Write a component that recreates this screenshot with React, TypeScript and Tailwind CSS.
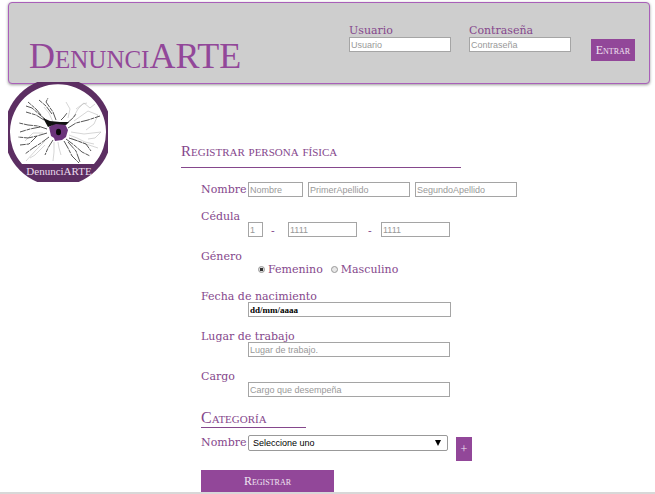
import type { InputHTMLAttributes, ReactNode } from "react";

const serif = "font-['Liberation_Serif',serif]";
const box =
  "block h-[15px] border border-[#a5a5a5] bg-white px-px text-[9px] leading-[13px] text-black placeholder:text-[#999] outline-none";
const sans = "font-['Liberation_Sans',sans-serif]";
const labelBase = "block h-[13px] text-[11px] whitespace-nowrap";
const label = `${labelBase} leading-[15px]`;
const loginLabel = `${labelBase} leading-[13px]`;

function TextBox({ className = "", ...rest }: InputHTMLAttributes<HTMLInputElement>) {
  return <input type="text" {...rest} className={`${box} ${sans} ${className}`} />;
}

function Field({ id, title, children }: { id: string; title: string; children: ReactNode }) {
  return (
    <div className="mb-3">
      <label htmlFor={id} className={label}>{title}</label>
      <div className="pl-[47px]">{children}</div>
    </div>
  );
}

const darkVeins = [
  "M37 37L32 33L24 26L18 24", "M36 38L28 33L18 30", "M33 33L28 27L20 20",
  "M48 38L45 30L38 20L40 16", "M44 32L38 24L31 18", "M53 38L56 35L59 31",
  "M58 42L65 36L68 32", "M39 47L30 44L20 43L11 41", "M32 45L22 47L12 50",
  "M39 51L29 54L20 56L10 55", "M29 54L21 62L12 63", "M41 55L33 61L25 66L17 72",
  "M45 58L40 66L37 73", "M56 59L60 66L64 74L71 81", "M58 57L66 63L74 70L82 74",
  "M61 56L70 59L78 62L83 69", "M60 60L68 69L72 80", "M60 46L68 41L80 38L92 34",
];

const lightVeins = [
  "M45 40L41 31L36 25", "M66 39L73 34L80 29L90 33L86 42L78 48", "M65 36L70 27L75 22L79 21",
  "M60 36L62 27L58 20", "M68 27L76 21L82 26L87 22", "M61 53L69 56L77 60L86 62",
  "M63 50L76 52L93 50L87 56L80 57", "M37 59L28 68L18 79", "M46 60L46 70L45 79",
  "M50 60L51 66L53 73", "M63 56L72 60L90 66", "M35 51L25 51L17 59", "M37 63L27 73L22 76",
];

function Logo() {
  return (
    <svg viewBox="0 0 100 100" className="-mt-0.5 size-[100px] shrink-0" role="img" aria-label="DenunciARTE">
      <circle cx="50" cy="50" r="54" fill="#5c2e62" />
      <path d="M14 82A48 48 0 1 1 86 82Z" fill="#fff" />
      <g fill="none" stroke="#bbb" strokeWidth=".6">
        {lightVeins.map((d) => <path key={d} d={d} />)}
      </g>
      <g fill="none" stroke="#444" strokeWidth=".9" strokeDasharray="9 .8 4 .8">
        {darkVeins.map((d) => <path key={d} d={d} />)}
      </g>
      <path d="M41 45L48 41L57 42L60 48L58 55L54 58L47 59L46 56L43 54Z" fill="#6b347b" />
      <path d="M35 36L42 39L52 40L61 40L58 43L48 42L40 45Z" fill="#111" />
      <ellipse cx="50.5" cy="50" rx="2.5" ry="3.2" fill="#080808" />
      <text x="51" y="93" textAnchor="middle" fill="#eadcec" className={`${serif} text-[11px]`}>DenunciARTE</text>
    </svg>
  );
}

export default function App() {
  return (
    <div className="border-b-2 border-[#d8d8d8] bg-white font-['DejaVu_Serif',serif] text-[#85478c]">
      <header className="mt-0.5 mr-[5px] ml-2 flex justify-between rounded-[4px] border border-[#a95fb9] bg-[#cecece] pt-[21px] pr-3.5 pb-[7px] pl-5 shadow-[0_1px_3px_#999]">
        <h1 className={`${serif} pt-3 text-[36px] leading-[40px] text-[#924799] [font-variant-caps:small-caps]`}>DenunciARTE</h1>
        <form className="flex items-start" onSubmit={(e) => e.preventDefault()}>
          <div>
            <label htmlFor="usuario" className={loginLabel}>Usuario</label>
            <TextBox id="usuario" placeholder="Usuario" className="w-[102px]" />
          </div>
          <div className="ml-[18px]">
            <label htmlFor="clave" className={loginLabel}>Contraseña</label>
            <TextBox id="clave" type="password" placeholder="Contraseña" className="w-[102px]" />
          </div>
          <button className={`${serif} mt-[15px] ml-5 h-[22px] w-11 bg-[#924799] text-[12px] text-[#f0e4f2] [font-variant-caps:small-caps]`}>Entrar</button>
        </form>
      </header>
      <main className="ml-2 flex items-start">
        <Logo />
        <form className="ml-[73px] flex-1 pt-[58px]" onSubmit={(e) => e.preventDefault()}>
          <h2 className={`${serif} w-[280px] border-b border-[#85478c] pb-[7px] text-[15px] leading-[18px] [font-variant-caps:small-caps]`}>Registrar persona física</h2>
          <div className="pt-3.5 pl-5">
            <div className="mb-3 flex items-start">
              <label htmlFor="nombre" className={`${label} w-[47px]`}>Nombre</label>
              <div className="flex gap-[5px]">
                <TextBox id="nombre" placeholder="Nombre" className="w-[55px]" />
                <TextBox aria-label="Primer apellido" placeholder="PrimerApellido" className="w-[102px]" />
                <TextBox aria-label="Segundo apellido" placeholder="SegundoApellido" className="w-[102px]" />
              </div>
            </div>
            <Field id="cedula" title="Cédula">
              <div className="flex text-[11px] leading-[20px]">
                <TextBox id="cedula" placeholder="1" className="w-[15px]" />
                <span className="h-[15px] w-[25px] pl-2">-</span>
                <TextBox aria-label="Cédula, segunda parte" placeholder="1111" className="w-[69px]" />
                <span className="h-[15px] w-6 pl-[11px]">-</span>
                <TextBox aria-label="Cédula, tercera parte" placeholder="1111" className="w-[69px]" />
              </div>
            </Field>
            <fieldset className="mb-3">
              <legend className={label}>Género</legend>
              <div className="flex h-[15px] items-center gap-2 pl-[57px]">
                {["Femenino", "Masculino"].map((g, i) => (
                  <label key={g} className="flex items-center gap-[3px] text-[11px] leading-[15px]">
                    <input type="radio" name="genero" defaultChecked={i === 0} className="size-[7px] appearance-none rounded-full border border-[#999] bg-[#e8e8e8] checked:bg-[radial-gradient(#333_40%,#ddd_55%)]" />
                    {g}
                  </label>
                ))}
              </div>
            </fieldset>
            <Field id="fecha" title="Fecha de nacimiento">
              <input id="fecha" type="text" defaultValue="dd/mm/aaaa" className={`${box} ${serif} w-[203px] font-bold`} />
            </Field>
            <Field id="lugar" title="Lugar de trabajo">
              <TextBox id="lugar" placeholder="Lugar de trabajo." className="w-[202px]" />
            </Field>
            <Field id="cargo" title="Cargo">
              <TextBox id="cargo" placeholder="Cargo que desempeña" className="w-[202px]" />
            </Field>
            <h3 className={`${serif} w-[105px] border-b border-[#85478c] text-[16px] leading-[18px] [font-variant-caps:small-caps]`}>Categoría</h3>
            <div className="flex items-start pt-[7px]">
              <label htmlFor="categoria" className={`${label} w-[47px]`}>Nombre</label>
              <div className="relative">
                <select id="categoria" className="block h-4 w-[200px] appearance-none rounded-[2px] border border-[#999] bg-white pl-1 font-['Liberation_Sans',sans-serif] text-[9px] leading-[14px] text-black">
                  <option>Seleccione uno</option>
                </select>
                <svg viewBox="0 0 6 6" className="pointer-events-none absolute top-[5px] right-[7px] size-1.5"><path d="M0 0H6L3 6Z" /></svg>
              </div>
              <button type="button" aria-label="+" className={`${serif} mt-0.5 ml-2 h-6 w-4 bg-[#924799] text-[12px] text-[#f0e4f2]`}>+</button>
            </div>
            <button className={`${serif} mt-[9px] block h-[22px] w-[133px] bg-[#924799] text-[12px] text-[#f0e4f2] [font-variant-caps:small-caps]`}>Registrar</button>
          </div>
        </form>
      </main>
    </div>
  );
}
